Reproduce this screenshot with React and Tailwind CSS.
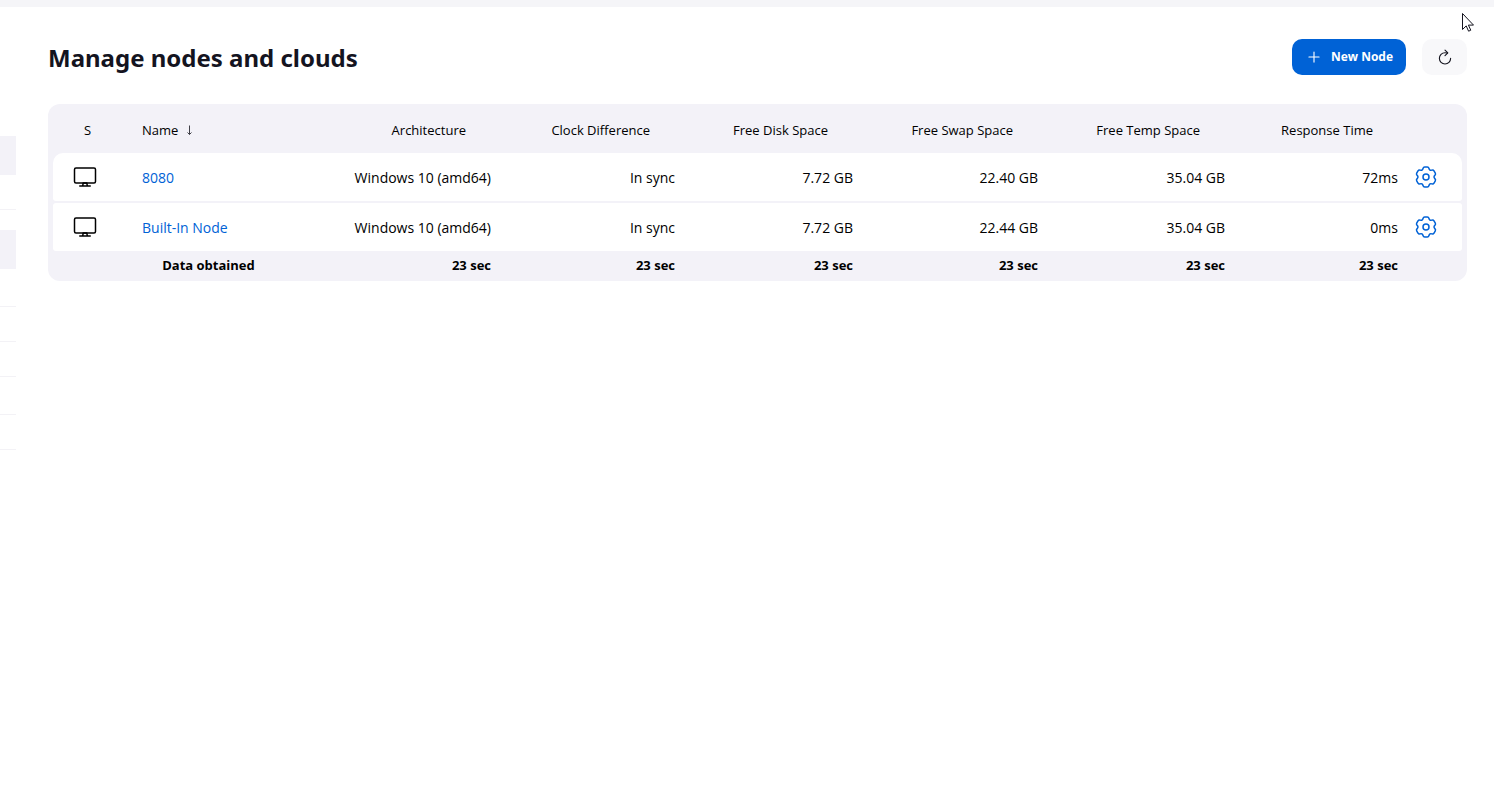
import { IoAddOutline, IoRefreshOutline } from "react-icons/io5";

const columns = [
  { label: "Architecture", key: "architecture" },
  { label: "Clock Difference", key: "clock" },
  { label: "Free Disk Space", key: "disk" },
  { label: "Free Swap Space", key: "swap" },
  { label: "Free Temp Space", key: "temp" },
  { label: "Response Time", key: "response" },
];

const nodes = [
  { name: "8080", architecture: "Windows 10 (amd64)", clock: "In sync", disk: "7.72 GB", swap: "22.40 GB", temp: "35.04 GB", response: "72ms" },
  { name: "Built-In Node", architecture: "Windows 10 (amd64)", clock: "In sync", disk: "7.72 GB", swap: "22.44 GB", temp: "35.04 GB", response: "0ms" },
];

// Rotates a point around the gear's centre by a number of 60 degree steps.
function spin([x, y], step) {
  const a = (step * Math.PI) / 3;
  const px = 12 + x * Math.cos(a) - y * Math.sin(a);
  const py = 12 + x * Math.sin(a) + y * Math.cos(a);
  return px.toFixed(2) + " " + py.toFixed(2);
}

// Six rounded teeth joined by shallow valleys.
const gearPath =
  "M" + spin([-3, -8.5], 0) +
  [0, 1, 2, 3, 4, 5]
    .map(
      (s) =>
        "Q" + spin([-2.6, -10], s) + " " + spin([-1.3, -10], s) +
        "L" + spin([1.3, -10], s) +
        "Q" + spin([2.6, -10], s) + " " + spin([3, -8.5], s) +
        "Q" + spin([3.6, -6.24], s) + " " + spin([-3, -8.5], s + 1)
    )
    .join("") +
  "Z";

function GearIcon() {
  return (
    <svg className="size-6" viewBox="0 0 24 24" fill="none" stroke="currentColor" strokeWidth="1.5" strokeLinejoin="round" aria-hidden="true">
      <path d={gearPath} />
      <circle cx="12" cy="12" r="3" />
    </svg>
  );
}

function ComputerIcon() {
  return (
    <svg className="size-6 text-black" viewBox="0 0 512 512" fill="none" stroke="currentColor" strokeWidth="32" strokeLinecap="round" strokeLinejoin="round" aria-hidden="true">
      <rect x="32" y="64" width="448" height="320" rx="32" />
      <path d="M304 448l-8-64h-80l-8 64zM368 448H144" />
    </svg>
  );
}

function SortArrow() {
  return (
    <svg className="ml-2 inline-block h-[10px] w-[7px] align-baseline text-[#404048]" viewBox="0 0 7 10" fill="none" stroke="currentColor" strokeWidth="1" aria-hidden="true">
      <path d="M3.5 .5v9M1.500 7.500l2 2l2-2" />
    </svg>
  );
}

function SidePanelEdge() {
  return (
    <div className="w-4 shrink-0 pt-[129px]" aria-hidden="true">
      <div className="h-[39px] bg-[#f3f2f8]" />
      <div className="h-[35px] border-b border-[#f3f2f6]" />
      <div className="mt-5 h-[39px] bg-[#f3f2f8]" />
      <div className="h-[38px] border-b border-[#f3f2f6]" />
      <div className="h-[35px] border-b border-[#f3f2f6]" />
      <div className="h-[35px] border-b border-[#f3f2f6]" />
      <div className="h-[38px] border-b border-[#f3f2f6]" />
      <div className="h-[35px] border-b border-[#f3f2f6]" />
    </div>
  );
}

function NodeRow({ node, first }) {
  return (
    <tr className="h-12">
      <td className={first ? "rounded-l-[3px] rounded-tl-[10px] bg-white pl-5" : "rounded-l-[3px] bg-white pl-5"}>
        <ComputerIcon />
      </td>
      <td className="bg-white px-4 pt-[2px]">
        <a href="#" className="text-[#0062d6]">{node.name}</a>
      </td>
      {columns.map((c) => (
        <td key={c.key} className="bg-white px-4 pt-[2px] text-right">{node[c.key]}</td>
      ))}
      <td className={first ? "rounded-r-[3px] rounded-tr-[10px] bg-white" : "rounded-r-[3px] bg-white"}>
        <a href="#" aria-label={"Configure " + node.name} className="block w-6 text-[#0062d6]">
          <GearIcon />
        </a>
      </td>
    </tr>
  );
}

export default function App() {
  return (
    <div className="relative min-h-screen bg-white font-['Open_Sans','Noto_Sans',sans-serif] text-sm font-medium text-black">
      <div className="h-[7px] bg-[#f5f5f8]" />
      <div className="flex">
        <SidePanelEdge />
        <main className="min-w-0 flex-1 pt-8 pr-[27px] pl-8">
          <div className="flex h-9 items-center justify-between">
            <h1 className="pt-[2px] font-['Noto_Sans',sans-serif] text-2xl font-bold text-[#14141f]">Manage nodes and clouds</h1>
            <div className="flex gap-4">
              <button type="button" className="flex h-9 items-center gap-2 rounded-[10px] bg-[#0062d6] px-[13px] text-xs font-bold text-white">
                <IoAddOutline className="size-[18px]" />
                New Node
              </button>
              <button type="button" aria-label="Refresh" className="flex h-9 w-[45px] items-center justify-center rounded-[10px] bg-[#f8f8fa] text-[#14141f]">
                <IoRefreshOutline className="size-[18px]" />
              </button>
            </div>
          </div>

          <div className="mt-[29px] overflow-x-auto rounded-xl bg-[#f3f2f8] px-[5px]">
            <table className="w-full table-fixed border-separate border-spacing-x-0 border-spacing-y-[2px] whitespace-nowrap">
              <colgroup>
                <col className="w-[73px]" />
                <col className="w-[165px]" />
                <col className="w-[216px]" />
                <col className="w-[184px]" />
                <col className="w-[178px]" />
                <col className="w-[185px]" />
                <col className="w-[187px]" />
                <col className="w-[173px]" />
                <col className="w-[48px]" />
              </colgroup>
              <thead>
                <tr className="h-[45px] text-[13px]">
                  <th className="pt-1 pl-[31px] text-left font-medium">S</th>
                  <th className="px-4 pt-1 text-left font-medium">Name<SortArrow /></th>
                  {columns.map((c) => (
                    <th key={c.key} className="pt-1 pr-[41px] text-right font-medium">{c.label}</th>
                  ))}
                  <td />
                </tr>
              </thead>
              <tbody>
                {nodes.map((n, i) => (
                  <NodeRow key={n.name} node={n} first={i === 0} />
                ))}
              </tbody>
              <tfoot>
                <tr className="h-[26px] text-[13px]">
                  <td />
                  <th className="pb-[2px] font-bold">Data obtained</th>
                  {columns.map((c) => (
                    <td key={c.key} className="px-4 pb-[2px] text-right font-bold">23 sec</td>
                  ))}
                  <td />
                </tr>
              </tfoot>
            </table>
          </div>
        </main>
      </div>

      <svg className="absolute top-3 right-5 h-5 w-3" viewBox="0 0 12 20" fill="white" stroke="#14141f" strokeWidth="1" aria-hidden="true">
        <path d="M.5 1.5v16l3.7-3.6 2.4 5.3 2.2-1-2.4-5.1h5.1z" />
      </svg>
    </div>
  );
}
